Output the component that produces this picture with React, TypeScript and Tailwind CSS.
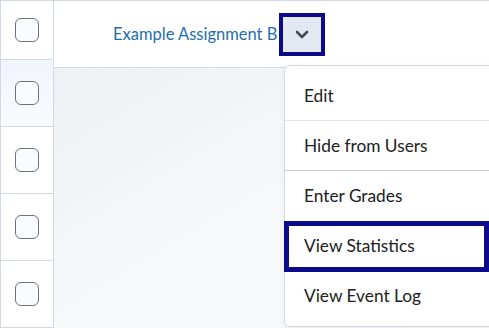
import React from 'react';

const items = ['Edit', 'Hide from Users', 'Enter Grades', 'View Statistics', 'View Event Log'];

function Checkbox() {
  return <div className="w-[24px] h-[24px] rounded-[6px] border border-[#6e7376] bg-[#f9fbff]" />;
}

export default function App() {
  return (
    <div className="relative w-[489px] h-[328px] overflow-hidden bg-white font-['Lato','Liberation_Sans',sans-serif]">
      <div className="flex h-full">
        {/* Checkbox column */}
        <div className="w-[54px] flex flex-col border-l border-r border-[#d3d9e3]">
          <div className="h-[68px] border-t border-b border-[#d3d9e3] flex items-center justify-center">
            <Checkbox />
          </div>
          {[0, 1, 2, 3].map((i) => (
            <div
              key={i}
              className={`h-[67px] shrink-0 border-b border-[#d3d9e3] flex items-center justify-center ${
                i === 0 ? 'bg-gradient-to-b from-[#f1f5fc] to-[#f8fafd]' : 'bg-white'
              }`}
            >
              <Checkbox />
            </div>
          ))}
        </div>

        {/* Grade item column */}
        <div className="flex-1 flex flex-col">
          <div className="h-[68px] border-t border-b border-[#d3d9e3] bg-white flex items-center pl-[59px]">
            <span className="text-[16.5px] text-[#1e6fae] whitespace-nowrap">Example Assignment B</span>
            <div className="ml-[2px] w-[46px] h-[43px] border-4 border-[#0b0b8c] bg-[#e3e8f1] flex items-center justify-center">
              <svg width="14" height="9" viewBox="0 0 14 9" fill="none">
                <path d="M2 2l5 5 5-5" stroke="#494c4e" strokeWidth="2.6" strokeLinecap="round" strokeLinejoin="round" />
              </svg>
            </div>
          </div>
          <div className="flex-1 bg-gradient-to-br from-[#edf0f4] via-[#f7f8fa] to-[#fafafb]" />
        </div>
      </div>

      {/* Dropdown menu */}
      <div className="absolute left-[284px] top-[65px] w-[230px] h-[262px] bg-white border border-[#d3d9e3] rounded-[6px] shadow-[0_2px_6px_rgba(0,0,0,0.06)] py-[5px]">
        {items.map((label, i) => (
          <div
            key={label}
            className={`relative h-[50px] flex items-center pl-[19px] text-[17.3px] text-[#202122] ${
              i === 0 ? 'border-b border-[#e3e6ea]' : i === 1 ? 'border-b border-[#c8ccd1]' : ''
            }`}
          >
            {label}
            {label === 'View Statistics' && (
              <div className="absolute left-[-1px] top-0 w-[205px] h-[51px] border-[5px] border-[#0b0b8c]" />
            )}
          </div>
        ))}
      </div>
    </div>
  );
}
